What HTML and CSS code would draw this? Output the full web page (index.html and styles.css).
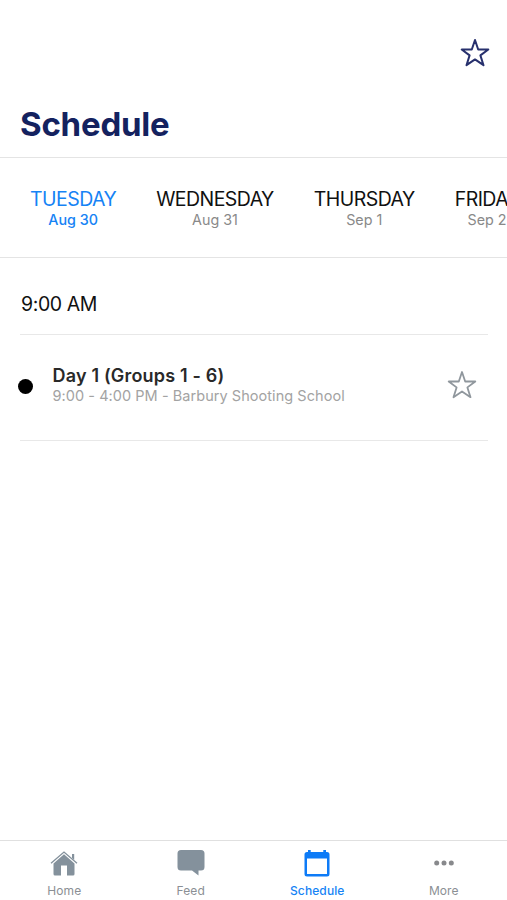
FILE: index.html
```html
<!DOCTYPE html>
<html lang="en">
<head>
    <meta charset="UTF-8">
    <title>Schedule</title>
    <link rel="stylesheet" href="styles.css">
</head>
<body>

    <!-- Header -->
    <header class="header">
        <svg class="star header-star" viewBox="0 0 30 30">
            <path d="M15 2 L18.2 11.5 L28.3 11.5 L20.4 17.4 L23.5 27.2 L15 21.4 L6.5 27.2 L9.6 17.4 L1.7 11.5 L11.8 11.5 Z"/>
        </svg>
        <h1>Schedule</h1>
    </header>

    <!-- Day Tabs -->
    <div class="days">
        <div class="day active">
            <div class="day-name">TUESDAY</div>
            <div class="day-date">Aug 30</div>
        </div>
        <div class="day">
            <div class="day-name">WEDNESDAY</div>
            <div class="day-date">Aug 31</div>
        </div>
        <div class="day">
            <div class="day-name">THURSDAY</div>
            <div class="day-date">Sep 1</div>
        </div>
        <div class="day">
            <div class="day-name">FRIDAY</div>
            <div class="day-date">Sep 2</div>
        </div>
    </div>

    <!-- Session List -->
    <main class="content">
        <h2 class="time">9:00 AM</h2>
        <div class="session">
            <span class="dot"></span>
            <div class="session-text">
                <div class="session-title">Day 1 (Groups 1 - 6)</div>
                <div class="session-info">9:00 - 4:00 PM - Barbury Shooting School</div>
            </div>
            <svg class="star session-star" viewBox="0 0 30 30">
                <path d="M15 2 L18.2 11.5 L28.3 11.5 L20.4 17.4 L23.5 27.2 L15 21.4 L6.5 27.2 L9.6 17.4 L1.7 11.5 L11.8 11.5 Z"/>
            </svg>
        </div>
    </main>

    <!-- Bottom Navigation -->
    <nav class="tabbar">
        <a class="tab">
            <svg viewBox="0 0 28 28">
                <path class="line" d="M1 14.3 L14 3 L27 14.3"/>
                <path d="M22 5 H24.2 V11 L22 9 Z"/>
                <path d="M14 5.2 L24.5 14.5 V25 Q24.5 26.5 23 26.5 H17 V16.5 H11 V26.5 H5 Q3.5 26.5 3.5 25 V14.5 Z"/>
            </svg>
            <span>Home</span>
        </a>
        <a class="tab">
            <svg viewBox="0 0 28 28">
                <path d="M4 1 H24 Q27.5 1 27.5 4.5 V18 Q27.5 21.5 24 21.5 H21.5 V26.5 L15 21.5 H4 Q0.5 21.5 0.5 18 V4.5 Q0.5 1 4 1 Z"/>
            </svg>
            <span>Feed</span>
        </a>
        <a class="tab active">
            <svg viewBox="0 0 28 28">
                <path fill-rule="evenodd" d="M5 1 H7.7 V3 H20.3 V1 H23 V3 H24 Q26.5 3 26.5 5.5 V25 Q26.5 27.5 24 27.5 H4 Q1.5 27.5 1.5 25 V5.5 Q1.5 3 4 3 H5 Z M4 9.5 V25 H24 V9.5 Z"/>
            </svg>
            <span>Schedule</span>
        </a>
        <a class="tab more">
            <svg viewBox="0 0 28 28">
                <circle cx="6.7" cy="14" r="2.5"/>
                <circle cx="14" cy="14" r="2.5"/>
                <circle cx="21.3" cy="14" r="2.5"/>
            </svg>
            <span>More</span>
        </a>
    </nav>

</body>
</html>
```
FILE: styles.css
```css
* {
    box-sizing: border-box;
}

body {
    margin: 0;
    height: 900px;
    display: flex;
    flex-direction: column;
    overflow: hidden;
    font-family: Inter, sans-serif;
    background-color: #fff;
    color: #111;
}

.header {
    height: 158px;
    display: flex;
    flex-direction: column;
    padding: 38px 17px 0 20px;
    border-bottom: 1px solid #e4e4e4;
}

.header h1 {
    margin: 36px 0 0;
    font-size: 33px;
    line-height: 40px;
    font-weight: 700;
    letter-spacing: -0.2px;
    color: #14225f;
}

.star {
    width: 30px;
    height: 30px;
    flex: none;
    fill: none;
    stroke-width: 2;
    stroke-linejoin: round;
}

.header-star {
    align-self: flex-end;
    stroke: #27306d;
}

.days {
    height: 100px;
    flex: none;
    display: flex;
    gap: 40px;
    overflow: hidden;
    padding: 29px 0 0 30px;
    border-bottom: 1px solid #e4e4e4;
}

.day {
    flex: none;
    text-align: center;
    white-space: nowrap;
}

.day-name {
    font-size: 19.5px;
    line-height: 24px;
    letter-spacing: -0.55px;
}

.day-date {
    font-size: 14.3px;
    line-height: 17px;
    color: #898989;
}

.day.active,
.day.active .day-date {
    color: #1683f5;
}

.day.active .day-date {
    font-weight: 500;
}

.content {
    flex: 1;
    padding: 0 19px 0 20px;
}

.time {
    height: 77px;
    margin: 0;
    padding: 34px 0 0 1px;
    border-bottom: 1px solid #e8e8e8;
    font-size: 19.5px;
    line-height: 24px;
    font-weight: 400;
    letter-spacing: -0.4px;
}

.session {
    height: 106px;
    display: flex;
    align-items: flex-start;
    border-bottom: 1px solid #e8e8e8;
}

.dot {
    width: 15px;
    height: 15px;
    margin: 44px 19px 0 -2px;
    border-radius: 50%;
    background-color: #000;
}

.session-text {
    flex: 1;
    padding: 29px 0 0 0.5px;
    white-space: nowrap;
}

.session-title {
    font-size: 18px;
    line-height: 24px;
    font-weight: 600;
    letter-spacing: 0.18px;
    color: #292929;
}

.session-info {
    font-size: 14.5px;
    line-height: 15px;
    letter-spacing: 0.05px;
    color: #a3a3a3;
}

.session-star {
    margin: 35px 11px 0 0;
    stroke: #90979d;
    stroke-width: 1.8;
}

.tabbar {
    height: 60px;
    display: flex;
    padding-left: 1px;
    border-top: 1px solid #e0e0e0;
}

.tab {
    flex: 1;
    display: flex;
    flex-direction: column;
    align-items: center;
    padding-top: 8px;
    color: #8b8f94;
}

.tab svg {
    width: 28px;
    height: 28px;
    fill: #84919c;
}

.tab .line {
    fill: none;
    stroke: #84919c;
    stroke-width: 1.3;
}

.tab span {
    margin-top: 6px;
    font-size: 12px;
    line-height: 16px;
    letter-spacing: 0.1px;
}

.tab.more svg {
    fill: #88898c;
}

.tab.active {
    color: #1683f5;
}

.tab.active span {
    font-weight: 500;
}

.tab.active svg {
    fill: #0d7bf7;
}
```
